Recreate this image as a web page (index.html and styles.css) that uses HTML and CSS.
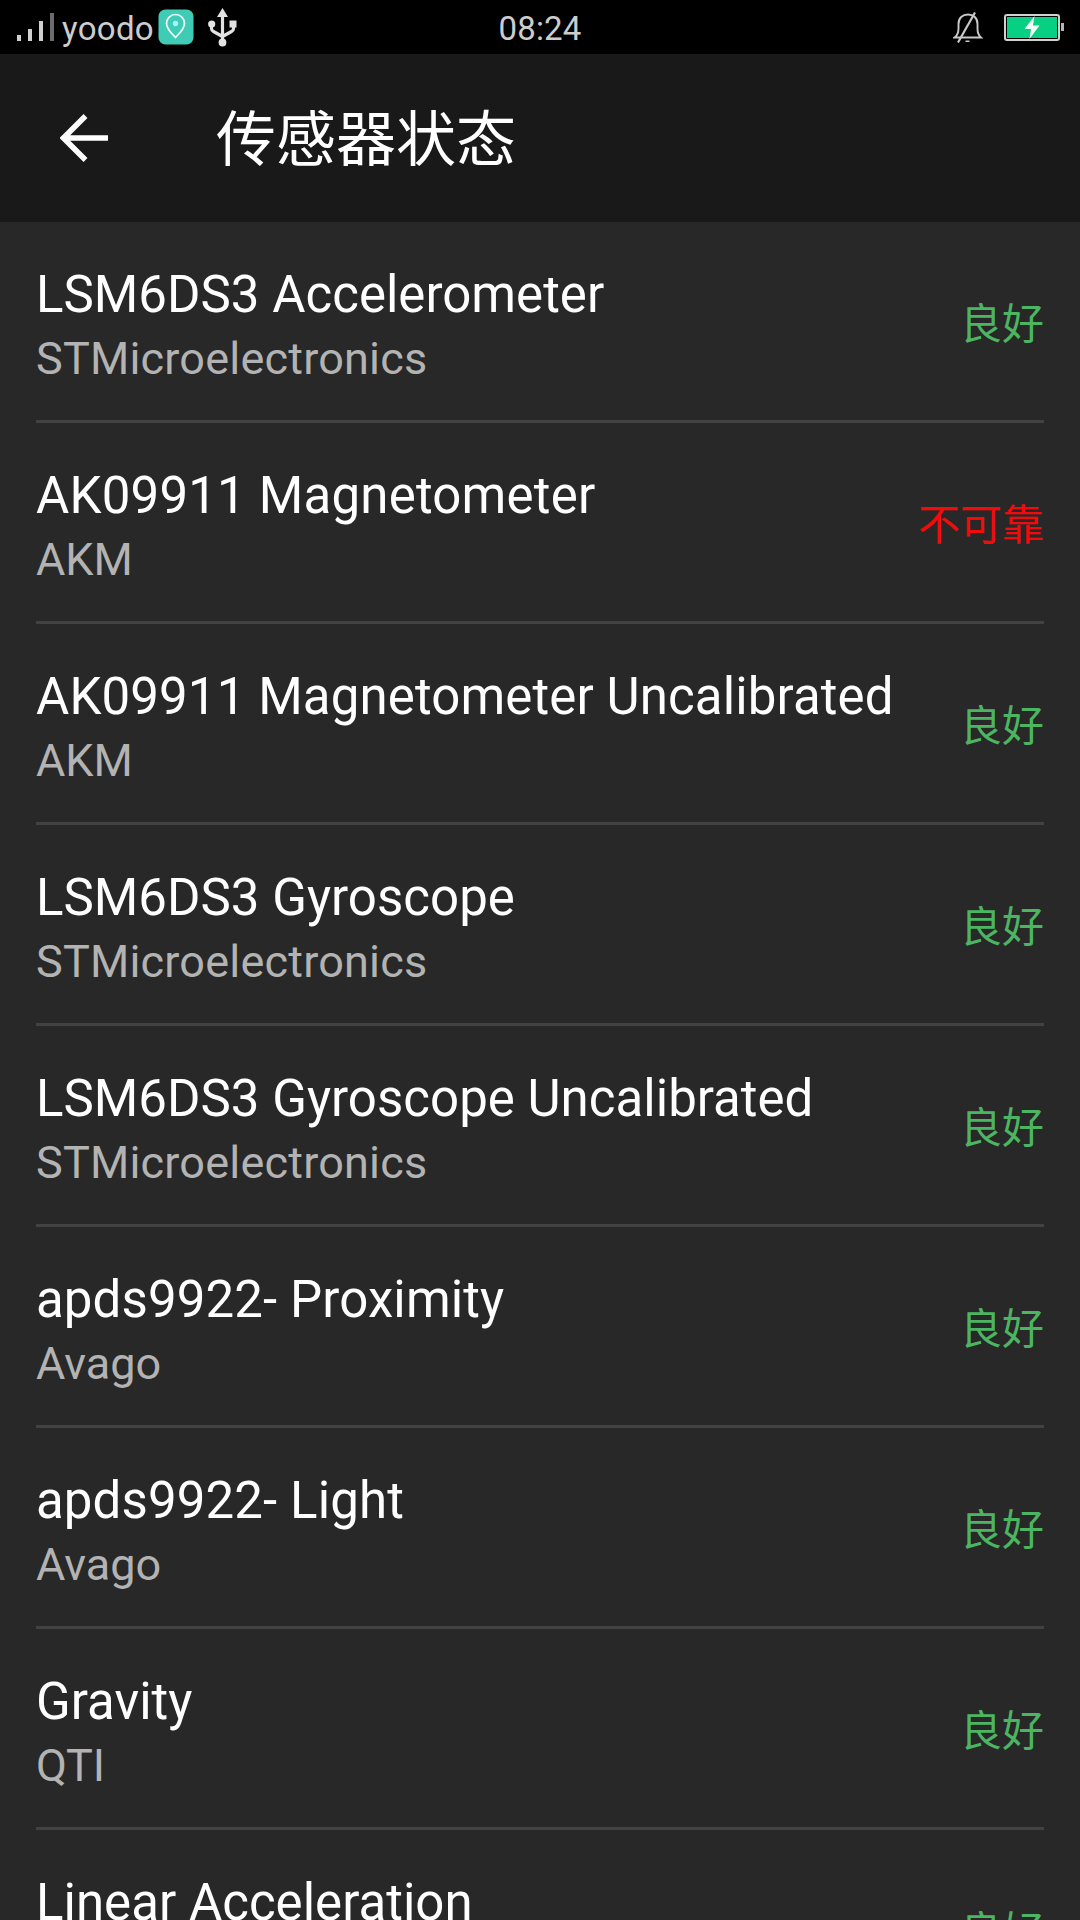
FILE: index.html
```html
<!DOCTYPE html>
<html lang="zh-CN">
<head>
<meta charset="utf-8">
<title>传感器状态</title>
<link rel="stylesheet" href="styles.css">
</head>
<body>
<div class="statusbar">
  <div class="status-left">
    <svg class="signal" width="38" height="29" viewBox="0 0 38 29"><path fill="#d0d0d0" d="M0 22h4v6H0zM11 16h4v12h-4zM22 8h4v20h-4z"/><path fill="#6c6c6c" d="M33 0h4v28h-4z"/></svg>
    <span class="carrier">yoodo</span>
    <svg class="location" width="36" height="36" viewBox="0 0 36 36"><rect x=".5" y=".5" width="35" height="35" rx="7" fill="#40cbb5"/><path d="M17.5 28.5C14 25 8.500 20 8.500 14.500a9 9 0 0 1 18 0C26.500 20 21 25 17.500 28.500Z" fill="none" stroke="#effffc" stroke-width="1.700"/><circle cx="17.500" cy="14.500" r="2.700" fill="#a8f0ff"/></svg>
    <svg class="usb" width="30" height="39" viewBox="0 0 30 39"><g fill="none" stroke="#e2e2e2" stroke-width="3.200"><path d="M14.500 7v27M3.500 16v4.500q0 2 2 3l9 5M25.500 16v4.500q0 2-2 3l-9 5"/></g><g fill="#e2e2e2"><path d="M14.500 0l5.500 9H9zM21.500 12.500h7v7h-7z"/><circle cx="3.700" cy="16" r="3.600"/><circle cx="14.500" cy="34.500" r="3.900"/></g></svg>
  </div>
  <span class="clock">08:24</span>
  <div class="status-right">
    <svg class="bell" width="30" height="32" viewBox="0 0 30 32"><g fill="none" stroke="#c8c8c8" stroke-width="1.900"><path d="M1.500 25.500c3-2 4-5.500 4-9V12c0-6 4-9.500 9.500-9.500S24.500 6 24.500 12v4.500c0 3.500 1 7 3.500 9z"/><path d="M5 30.500 22 .500" stroke-width="2.200"/></g><path d="M12.500 28.500h4v1.500h-4z" fill="#c8c8c8"/></svg>
    <svg class="battery" width="60" height="27" viewBox="0 0 60 27"><rect x="1" y="1" width="54" height="25" rx="2" fill="#000" stroke="#cdd3d0" stroke-width="2"/><path d="M3 3h50v21H3z" fill="#08d083"/><path d="M57 9h3v8h-3z" fill="#b5b5b5"/><path d="M30.500 2 20.500 15h6.500l-1.500 10L35.500 11.500H29z" fill="#effff6"/></svg>
  </div>
</div>
<header class="appbar">
  <svg class="back" width="50" height="50" viewBox="0 0 50 50"><path d="M48 25H4M25.500 3 3.500 25l22 22" fill="none" stroke="#fff" stroke-width="5.500"/></svg>
  <h1>传感器状态</h1>
</header>
<main class="list">
  <div class="row"><div class="info"><div class="name">LSM6DS3 Accelerometer</div><div class="vendor spaced">STMicroelectronics</div></div><div class="state">良好</div></div>
  <div class="row"><div class="info"><div class="name spaced">AK09911 Magnetometer</div><div class="vendor">AKM</div></div><div class="state bad">不可靠</div></div>
  <div class="row"><div class="info"><div class="name spaced-slight">AK09911 Magnetometer Uncalibrated</div><div class="vendor">AKM</div></div><div class="state">良好</div></div>
  <div class="row"><div class="info"><div class="name">LSM6DS3 Gyroscope</div><div class="vendor spaced">STMicroelectronics</div></div><div class="state">良好</div></div>
  <div class="row"><div class="info"><div class="name">LSM6DS3 Gyroscope Uncalibrated</div><div class="vendor spaced">STMicroelectronics</div></div><div class="state">良好</div></div>
  <div class="row"><div class="info"><div class="name spaced-slight">apds9922- Proximity</div><div class="vendor">Avago</div></div><div class="state">良好</div></div>
  <div class="row"><div class="info"><div class="name spaced-slight">apds9922- Light</div><div class="vendor">Avago</div></div><div class="state">良好</div></div>
  <div class="row"><div class="info"><div class="name">Gravity</div><div class="vendor">QTI</div></div><div class="state">良好</div></div>
  <div class="row"><div class="info"><div class="name">Linear Acceleration</div></div><div class="state">良好</div></div>
</main>
</body>
</html>
```
FILE: styles.css
```css
* { box-sizing: border-box; }
body {
  margin: 0;
  width: 1080px;
  height: 1920px;
  overflow: hidden;
  display: flex;
  flex-direction: column;
  background: #282828;
  color: #fff;
  font-family: Roboto, "Noto Sans CJK SC", sans-serif;
}
svg { display: block; flex: none; }
.statusbar {
  flex: none;
  height: 54px;
  background: #000;
  color: #cdcdcd;
  display: grid;
  grid-template-columns: 1fr auto 1fr;
  align-items: start;
  white-space: nowrap;
}
.status-left, .status-right { display: flex; align-items: flex-start; }
.status-left { padding-left: 17px; }
.status-right { justify-content: flex-end; padding-right: 16px; }
.signal { margin-top: 13px; }
.carrier { width: 95px; margin: 9px 0 0 7px; font-size: 33px; line-height: 39px; letter-spacing: .3px; }
.location { margin-top: 9px; margin-left: 1px; }
.usb { margin: 8px 0 0 14px; }
.clock { margin-top: 9px; font-size: 33px; line-height: 39px; letter-spacing: .2px; }
.bell { margin: 12px 21px 0 0; }
.battery { margin-top: 14px; }
.appbar {
  flex: none;
  height: 168px;
  padding-left: 60px;
  display: flex;
  align-items: center;
  gap: 106px;
  background: #191919;
}
h1 { margin: 0; padding-top: 6px; font-size: 60px; line-height: 90px; font-weight: 400; }
.list { flex: 1; min-height: 0; overflow: hidden; }
.row {
  height: 201px;
  margin: 0 36px;
  padding-top: 39px;
  border-bottom: 3px solid #424242;
  display: flex;
  align-items: flex-start;
  justify-content: space-between;
  white-space: nowrap;
}
.name { font-size: 51px; line-height: 67px; letter-spacing: .02px; }
.vendor { font-size: 45px; line-height: 62px; color: #b3b3b3; }
.name.spaced, .vendor.spaced { letter-spacing: .2px; }
.name.spaced-slight { letter-spacing: .12px; }
.state { margin-top: 34px; font-size: 42px; line-height: 60px; color: #4bb562; }
.bad { color: #f30b0b; }
```
